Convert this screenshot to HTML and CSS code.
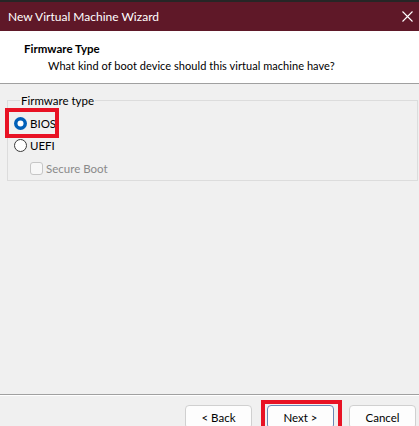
FILE: index.html
```html
<!DOCTYPE html>
<html>
<head>
<meta charset="utf-8">
<link rel="stylesheet" href="styles.css">
</head>
<body>
<div class="window">
  <div class="titlebar">
    <span class="title">New Virtual Machine Wizard</span>
    <svg class="close" width="11" height="11" viewBox="0 0 11 11"><path d="M0.5 0.5 L10.5 10.5 M10.5 0.5 L0.5 10.5" stroke="#ffffff" stroke-width="1.1" fill="none"/></svg>
  </div>
  <div class="header">
    <div class="h-title">Firmware Type</div>
    <div class="h-sub">What kind of boot device should this virtual machine have?</div>
  </div>
  <div class="content">
    <fieldset class="group">
      <legend class="legend">Firmware type</legend>
      <div class="option">
        <svg class="radio" width="13" height="13" viewBox="0 0 13 13"><circle cx="6.5" cy="6.5" r="6.5" fill="#005fb8"/><circle cx="6.5" cy="6.5" r="3" fill="#ffffff"/></svg>
        <span>BIOS</span>
        <span class="highlight hl-bios"></span>
      </div>
      <div class="option">
        <svg class="radio" width="13" height="13" viewBox="0 0 13 13"><circle cx="6.5" cy="6.5" r="6" fill="#ffffff" stroke="#3a3a3a" stroke-width="1"/></svg>
        <span>UEFI</span>
      </div>
      <div class="option sub disabled">
        <span class="check"></span>
        <span>Secure Boot</span>
      </div>
    </fieldset>
  </div>
  <div class="footer">
    <button class="btn">&lt; Back</button>
    <button class="btn default">Next &gt;<span class="highlight hl-next"></span></button>
    <button class="btn">Cancel</button>
  </div>
</div>
</body>
</html>
```
FILE: styles.css
```css
* { box-sizing: border-box; }
html, body { margin: 0; padding: 0; }
body {
  font-family: Lato, "Liberation Sans", Arial, sans-serif;
  font-size: 11.5px;
  color: #000;
  background: #f0f0f0;
}
.window {
  width: 419px;
  height: 426px;
  overflow: hidden;
  background: #f0f0f0;
  display: flex;
  flex-direction: column;
}
.titlebar {
  height: 31px;
  flex: none;
  background: #5f1828;
  border-top: 2px solid #262626;
  display: flex;
  align-items: center;
  justify-content: space-between;
  padding: 0 3px 0 8px;
  color: #fff;
}
.title { font-size: 12px; }
.close { margin-right: 3px; }
.header {
  height: 53px;
  flex: none;
  background: #fff;
  border-bottom: 1px solid #a0a0a0;
  padding: 10px 0 0 24px;
}
.h-title { font-weight: bold; line-height: 15px; }
.h-sub { padding-left: 24px; line-height: 15px; margin-top: 2px; font-size: 11px; letter-spacing: 0.05px; }
.content {
  height: 311px;
  flex: none;
  padding: 9px 1px 0 7px;
  border-bottom: 1px solid #a0a0a0;
}
.group {
  margin: 0;
  border: 1px solid #dcdcdc;
  padding: 4px 0 5px 6px;
  height: 88px;
}
.legend {
  padding: 0 1px;
  margin-left: 6px;
  line-height: 15px;
}
.option {
  position: relative;
  display: flex;
  align-items: center;
  gap: 3px;
  height: 22px;
}
.option.sub { padding-left: 16px; gap: 3px; height: 24px; }
.disabled { color: #8a8a8a; }
.check {
  width: 13px;
  height: 13px;
  border: 1px solid #c6c6c6;
  border-radius: 3px;
  background: #f7f7f7;
}
.highlight {
  position: absolute;
  border: 4px solid #e81224;
  pointer-events: none;
}
.hl-bios { left: -9px; top: -4px; width: 54px; height: 30px; }
.footer {
  flex: 1;
  border-top: 1px solid #fff;
  display: flex;
  justify-content: flex-end;
  align-items: flex-start;
  gap: 15px;
  padding: 9px 3px 0 0;
}
.btn {
  position: relative;
  width: 67px;
  height: 24px;
  font-family: inherit;
  font-size: 11.5px;
  background: #fdfdfd;
  border: 1px solid #d0d0d0;
  border-radius: 4px;
  padding: 0;
  color: #000;
}
.btn.default { border-color: #6a87b5; }
.hl-next { left: -7px; top: -6px; width: 81px; height: 32px; }
```
